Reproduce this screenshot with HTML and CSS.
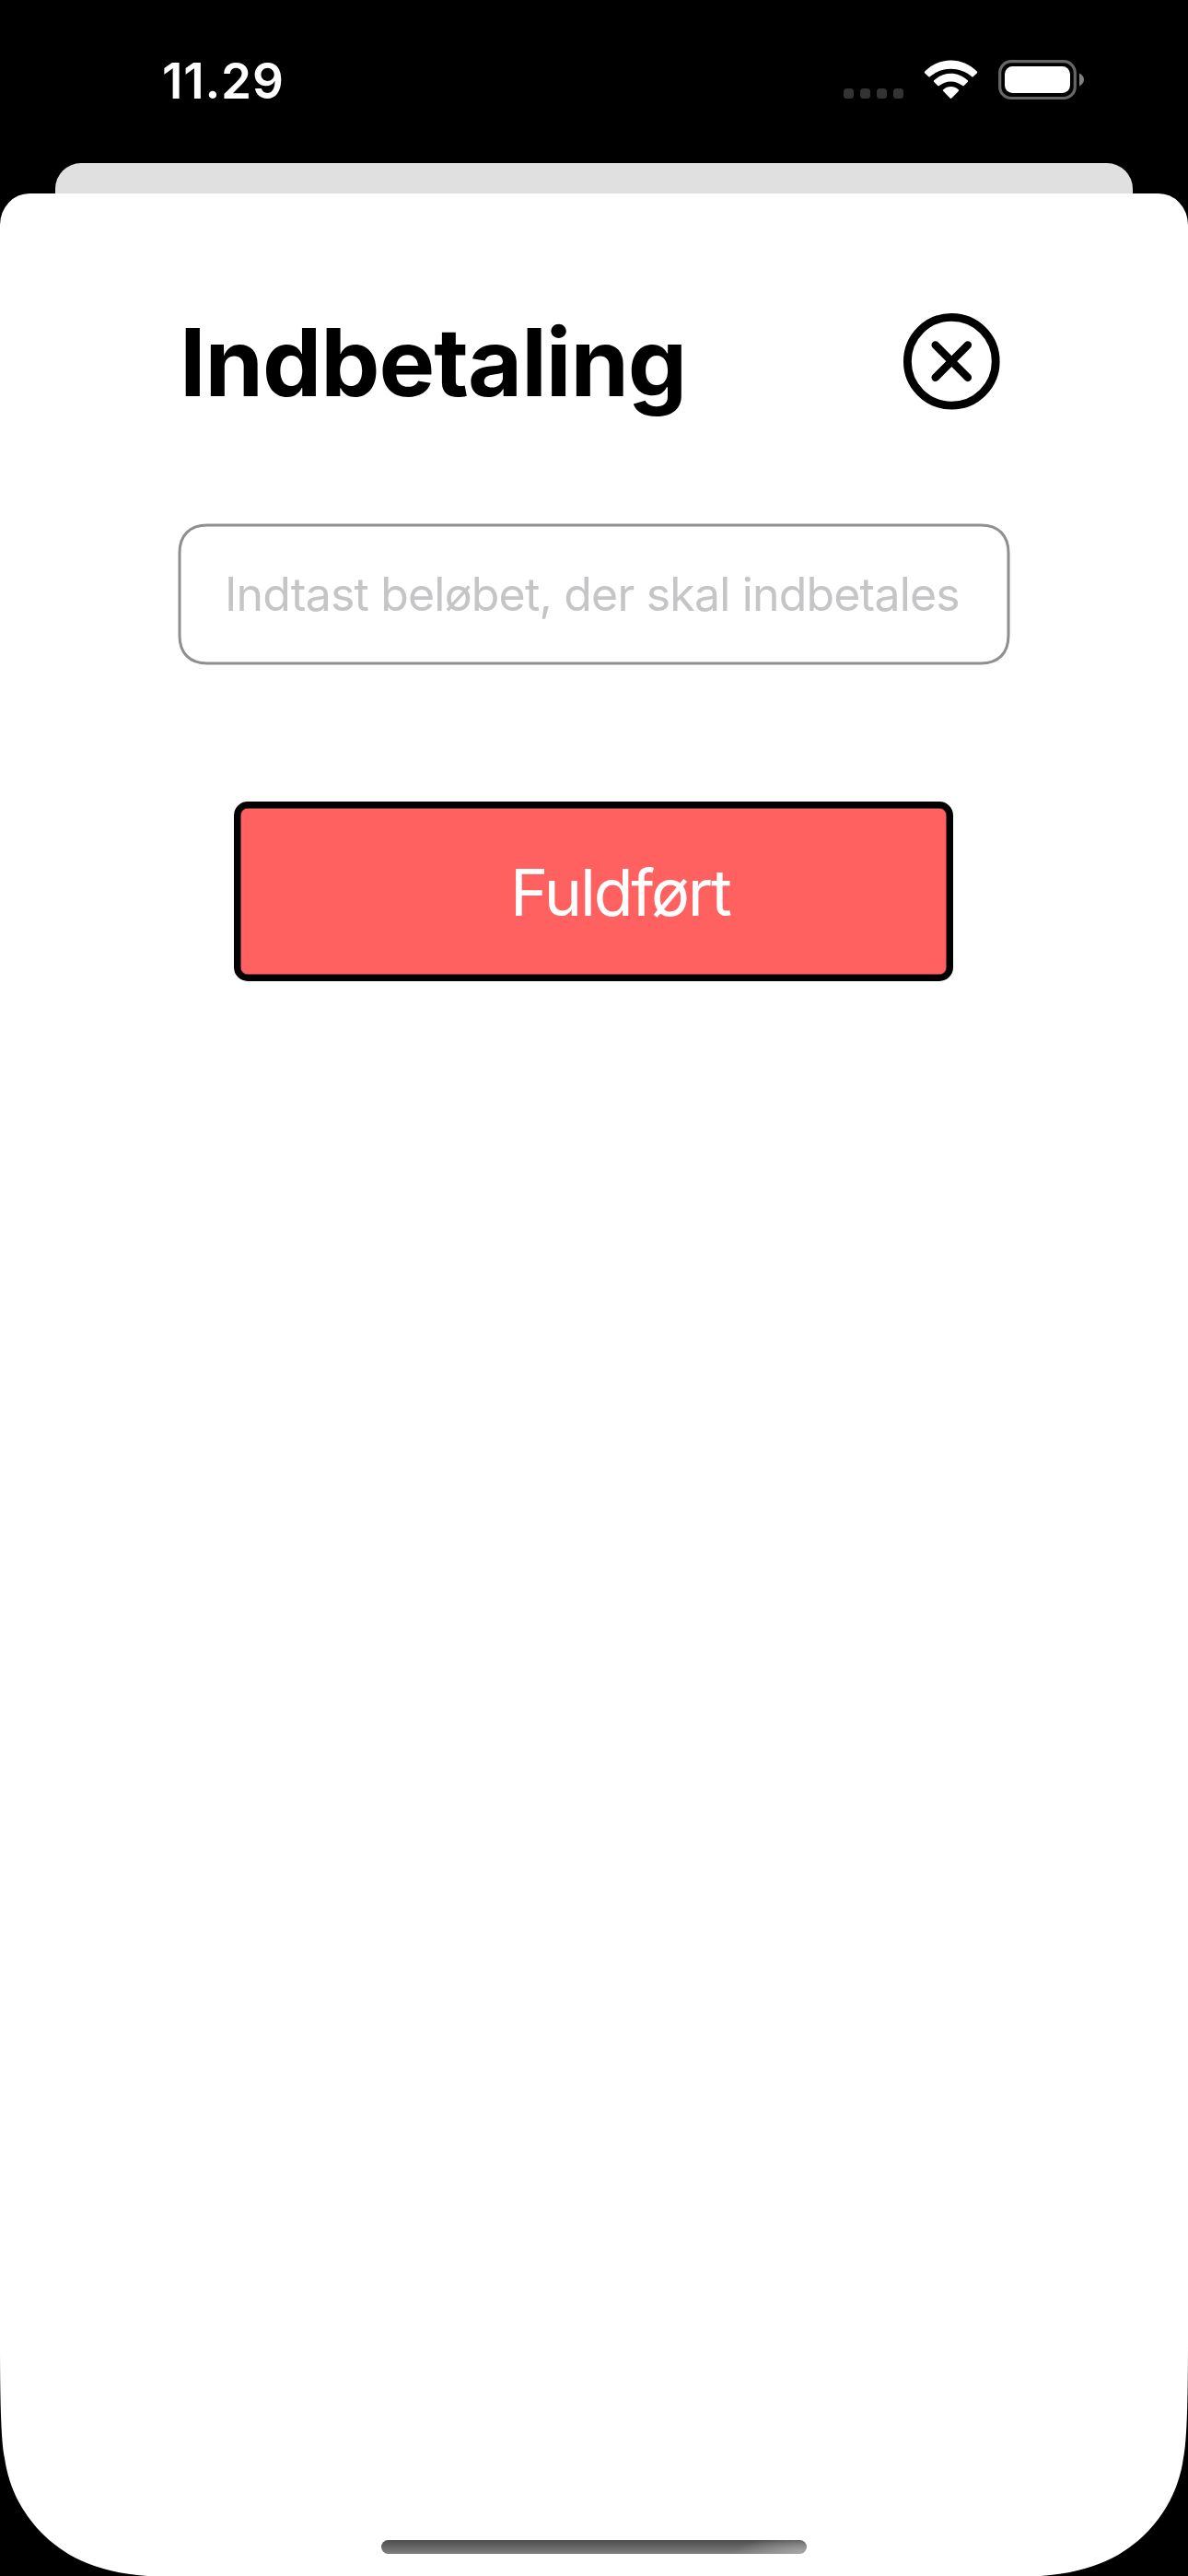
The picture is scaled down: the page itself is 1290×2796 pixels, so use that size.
FILE: index.html
```
<!DOCTYPE html>
<html lang="da">
<head>
<meta charset="utf-8">
<title>Indbetaling</title>
<link rel="stylesheet" href="styles.css">
</head>
<body>
<div class="screen">
  <header class="status">
    <span class="time">11.29</span>
    <svg class="indicators" viewBox="0 0 270 50" aria-hidden="true">
      <g fill="#333">
        <rect x="6" y="31" width="11" height="11" rx="3.5"/>
        <rect x="24" y="31" width="11" height="11" rx="3.5"/>
        <rect x="42" y="31" width="11" height="11" rx="3.5"/>
        <rect x="60" y="31" width="11" height="11" rx="3.5"/>
      </g>
      <g fill="#fff">
        <path d="M94.2 12.6Q93.3 13.6 94.3 14.6L98.3 18.3Q99 18.9 99.7 18.3C112.5 6.9 132.5 6.9 145.3 18.3Q146 18.9 146.7 18.3L150.7 14.6Q151.7 13.6 150.8 12.6C135 -3.6 110 -3.6 94.2 12.6Z"/>
        <path d="M104.2 22.3Q103.4 23.2 104.3 24.1L108.3 28Q109 28.7 109.8 28.1C117 21.8 128 21.8 135.2 28.1Q136 28.7 136.7 28L140.7 24.1Q141.6 23.2 140.8 22.3C130 12.3 115 12.3 104.2 22.3Z"/>
        <path d="M114.3 32.2Q113.5 33.1 114.3 34L121.6 41.5Q122.5 42.3 123.4 41.5L130.7 34Q131.5 33.1 130.7 32.2C126 28 119 28 114.3 32.2Z"/>
      </g>
      <rect x="175.7" y="1.7" width="81.6" height="39.8" rx="12.3" fill="none" stroke="#666" stroke-width="3.2"/>
      <rect x="181" y="7" width="71" height="29" rx="8.5" fill="#fff"/>
      <path d="M262 14.5C265 16 267 18.500 267 21.500S265 27 262 28.500Z" fill="#808080"/>
    </svg>
  </header>
  <div class="back-sheet"></div>
  <main class="sheet">
    <div class="heading">
      <h1 class="title">Indbetaling</h1>
      <svg class="close" viewBox="0 0 106 106" role="button" aria-label="Luk">
        <circle cx="53.300" cy="53.200" r="47.900"/>
        <path d="M35.700 35.500L70.900 70.800M70.900 35.500L35.700 70.800"/>
      </svg>
    </div>
    <div class="field">
      <svg class="field-outline" viewBox="0 0 904 154" aria-hidden="true">
        <path d="M32 2H872C891 2 902 13 902 32V122C902 141 891 152 872 152H32C13 152 2 141 2 122V32C2 13 13 2 32 2Z"/>
      </svg>
      <span class="placeholder">Indtast beløbet, der skal indbetales</span>
    </div>
    <div class="submit"><span class="submit-label">Fuldført</span></div>
    <div class="home-bar"></div>
  </main>
  <svg class="corner corner-left" viewBox="0 0 175 256" aria-hidden="true"><path d="M0 0C0 60 1 110 5 128C10 163 25 187 43 207C68 233 102 252 160 256H0Z"/></svg>
  <svg class="corner corner-right" viewBox="0 0 175 256" aria-hidden="true"><path d="M0 0C0 60 1 110 5 128C10 163 25 187 43 207C68 233 102 252 160 256H0Z"/></svg>
</div>
</body>
</html>
```

FILE: styles.css
```
* { box-sizing: border-box; }
body { margin: 0; background: #000; font-family: Inter, "Liberation Sans", sans-serif; }
.screen {
  position: relative;
  display: flex;
  flex-direction: column;
  width: 1290px;
  height: 2796px;
  overflow: hidden;
  background: #000;
}
.status {
  display: flex;
  justify-content: space-between;
  height: 177px;
  padding: 57px 110px 0 176px;
  color: #fff;
}
.time { font-size: 53px; line-height: 63px; font-weight: 600; letter-spacing: 0.8px; white-space: nowrap; }
.indicators { width: 270px; height: 50px; margin-top: 8px; }
.back-sheet {
  flex: none;
  height: 33px;
  margin: 0 60px;
  border-radius: 28px 28px 0 0;
  background: #e0e0e0;
}
.sheet {
  flex: 1;
  display: flex;
  flex-direction: column;
  align-items: center;
  border-radius: 32px 32px 0 0 / 34px 34px 0 0;
  background: #fff;
}
.heading {
  display: flex;
  justify-content: space-between;
  width: 904px;
  height: 106px;
  margin-top: 129px;
  padding: 0 11px 0 2px;
}
.title { margin: 0; font-size: 102px; line-height: 108px; font-weight: 700; letter-spacing: -1.05px; white-space: nowrap; }
.close { width: 106px; height: 106px; fill: none; stroke: #000; stroke-width: 8.8; stroke-linecap: round; }
.close path { stroke-width: 8.4; }
.field {
  position: relative;
  display: flex;
  align-items: center;
  width: 904px;
  height: 154px;
  margin-top: 123px;
  padding-left: 51px;
}
.field-outline { position: absolute; inset: 0; width: 904px; height: 154px; fill: none; stroke: #8e8e93; stroke-width: 3; }
.placeholder { font-size: 50px; line-height: 60px; letter-spacing: -0.82px; color: #c5c5c7; white-space: nowrap; }
.submit {
  display: flex;
  align-items: center;
  width: 781px;
  height: 195px;
  margin: 148px 1px 0 0;
  padding: 2px 0 0 293px;
  border: 7px solid #000;
  border-radius: 15px;
  background: #ff6161;
  box-shadow: inset 0 0 0 0.5px #000;
}
.submit-label { font-size: 70px; line-height: 80px; letter-spacing: -2.2px; color: #fff; white-space: nowrap; }
.home-bar {
  width: 462px;
  height: 15px;
  margin: auto 0 24px;
  border-radius: 8px;
  background: radial-gradient(ellipse 80px 20px at 100% 100%, #aaa, transparent), linear-gradient(#4c4c4c, #808080);
}
.corner { position: absolute; bottom: 0; width: 175px; height: 256px; }
.corner-left { left: 0; }
.corner-right { right: 0; transform: scaleX(-1); }
```
